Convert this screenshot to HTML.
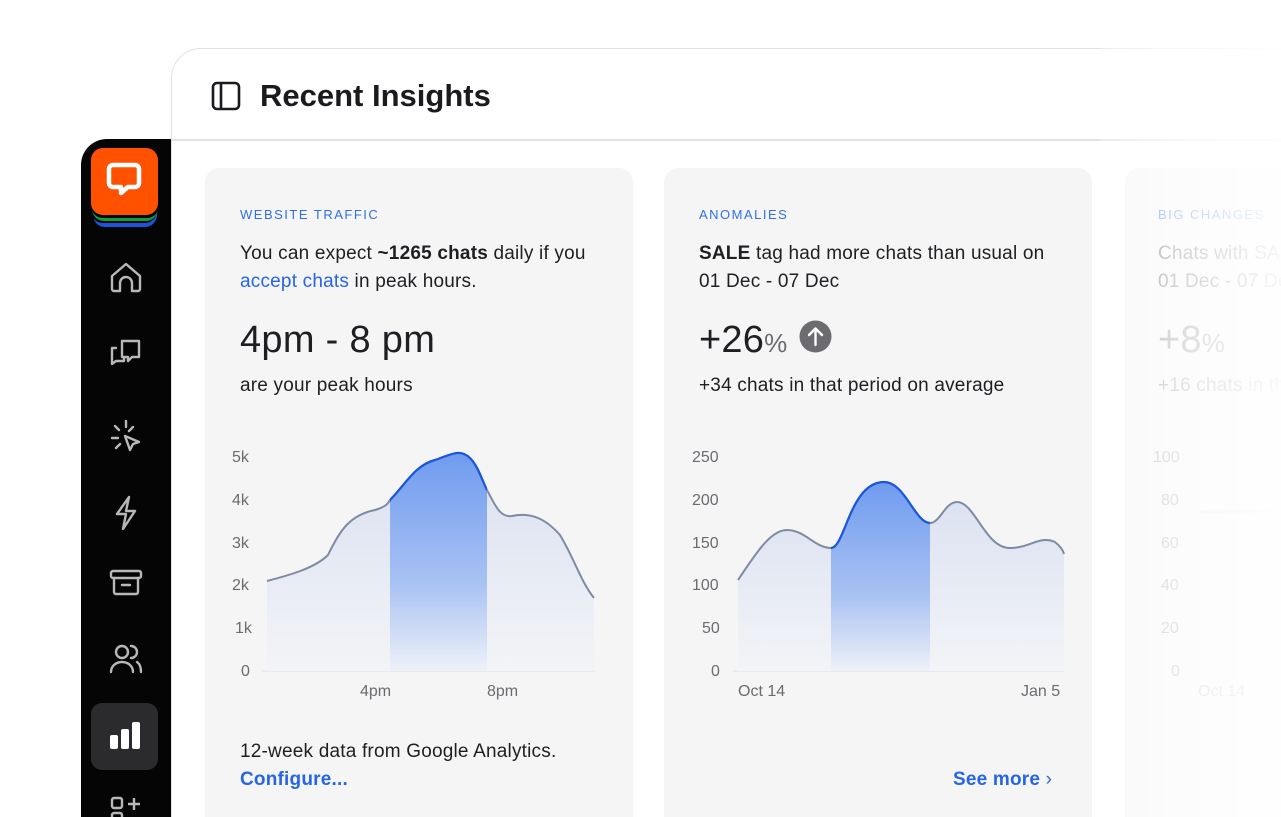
<!DOCTYPE html>
<html><head><meta charset="utf-8"><style>
*{margin:0;padding:0;box-sizing:border-box}
html,body{width:1281px;height:817px;overflow:hidden}
body{background:#fff;font-family:"Liberation Sans",sans-serif;position:relative;color:#1b1b1f}
.panel{position:absolute;left:171px;top:48px;width:1200px;height:800px;border:1.5px solid #e2e2e4;border-radius:30px 0 0 0;background:#fff}
.hdr{position:absolute;left:171px;top:139px;width:1110px;height:1.5px;background:#e2e2e4}
.title{position:absolute;left:260px;top:78px;font-size:31px;font-weight:600;letter-spacing:0}
.side{position:absolute;left:81px;top:139px;width:90px;height:678px;background:#050505;border-radius:26px 0 0 0}
.card{position:absolute;top:168px;width:428px;height:649px;background:#f5f5f6;border-radius:14px 14px 0 0}
.lab{position:absolute;font-size:13px;color:#2f6fe9;letter-spacing:1.5px}
.t{position:absolute;font-size:19px;line-height:28px;color:#1f1f23;white-space:nowrap;letter-spacing:0.2px}
.ax{position:absolute;font-size:16px;color:#6b6b70}
.blue{color:#2665e6}
</style></head><body>
<div class="panel"></div>
<div class="hdr"></div>
<svg style="position:absolute;left:211px;top:81px" width="30" height="30" viewBox="0 0 30 30" fill="none" stroke="#1b1b1f" stroke-width="2.6"><rect x="2" y="2" width="26" height="26" rx="4"/><line x1="10" y1="2" x2="10" y2="28"/></svg>
<div class="title">Recent Insights</div>

<div class="side"></div>
<svg style="position:absolute;left:89px;top:147px" width="72" height="84" viewBox="0 0 72 84">
<rect x="4" y="10" width="64" height="70" rx="12" fill="#1a56db"/>
<rect x="2" y="6" width="66" height="70" rx="12" fill="#050505"/>
<rect x="3" y="4" width="66" height="70" rx="12" fill="#0f9d42"/>
<rect x="2" y="1" width="68" height="70" rx="12" fill="#050505"/>
<rect x="2" y="1" width="67" height="67" rx="12" fill="#ff5100"/>
<path d="M24 18h22a4 4 0 0 1 4 4v14a4 4 0 0 1-4 4H39l-7 6v-6h-8a4 4 0 0 1-4-4V22a4 4 0 0 1 4-4z" fill="none" stroke="#fff" stroke-width="4.5" stroke-linejoin="round"/>
</svg>
<svg style="position:absolute;left:106px;top:258px" width="40" height="570" viewBox="0 0 40 570" fill="none" stroke="#b8b8bb" stroke-width="2.4" stroke-linecap="round" stroke-linejoin="round">
<path d="M6 31V18L20 6l14 12v13a2 2 0 0 1-2 2h-6v-8a6 6 0 0 0-12 0v8H8a2 2 0 0 1-2-2z"/>
<path d="M16 83h17V99h-7l-4 4v-4h-6z M10 90h-4v16l4-3h8v-4"/>
<path d="M20 163v6M9 168l4 4M6 180h6M10 190l4-4M27 169l-4 4M19 178l14 6-6 2-3 6z"/>
<path d="M23 239l-12 17h9l-3 15 12-18h-9z"/>
<rect x="5" y="313" width="30" height="7" rx="2"/><path d="M8 320v14a2 2 0 0 0 2 2h20a2 2 0 0 0 2-2v-14M16 327h8"/>
<circle cx="16" cy="394" r="6"/><path d="M5 414c0-6 5-10 11-10s11 4 11 10M25 388a6 6 0 0 1 0 12M31 404c3 2 4 6 4 10"/>
</svg>
<div style="position:absolute;left:91px;top:703px;width:67px;height:67px;background:#2b2b2d;border-radius:11px"></div>
<svg style="position:absolute;left:108px;top:720px" width="34" height="34" viewBox="0 0 34 34" fill="#fff"><rect x="2" y="15" width="8" height="14" rx="2"/><rect x="13" y="9" width="8" height="20" rx="2"/><rect x="24" y="2" width="8" height="27" rx="2"/></svg>
<svg style="position:absolute;left:110px;top:795px" width="34" height="22" viewBox="0 0 34 22" fill="none" stroke="#b8b8bb" stroke-width="2.4"><rect x="2" y="3" width="10" height="10" rx="2"/><path d="M24 3v12M18 9h12"/><rect x="2" y="18" width="10" height="10" rx="2"/></svg>

<div class="card" style="left:205px"></div>
<div class="card" style="left:664px"></div>
<div class="card" style="left:1125px"></div>

<div class="lab" style="left:240px;top:207px">WEBSITE TRAFFIC</div>
<div class="t" style="left:240px;top:240px">You can expect <b>~1265 chats</b> daily if you</div>
<div class="t" style="left:240px;top:268px"><span class="blue">accept chats</span> in peak hours.</div>
<div class="t" style="left:240px;top:318px;font-size:38px;line-height:44px;letter-spacing:0.3px">4pm - 8 pm</div>
<div class="t" style="left:240px;top:372px">are your peak hours</div>
<div class="ax" style="left:232px;top:449px">5k</div>
<div class="ax" style="left:232px;top:492px">4k</div>
<div class="ax" style="left:232px;top:535px">3k</div>
<div class="ax" style="left:232px;top:577px">2k</div>
<div class="ax" style="left:235px;top:620px">1k</div>
<div class="ax" style="left:241px;top:663px">0</div>
<div class="ax" style="left:360px;top:683px">4pm</div>
<div class="ax" style="left:487px;top:683px">8pm</div>
<div class="t" style="left:240px;top:738px">12-week data from Google Analytics.</div>
<div class="t blue" style="left:240px;top:766px;font-weight:700">Configure...</div>

<div class="lab" style="left:699px;top:207px">ANOMALIES</div>
<div class="t" style="left:699px;top:240px"><b>SALE</b> tag had more chats than usual on</div>
<div class="t" style="left:699px;top:268px">01 Dec - 07 Dec</div>
<div class="t" style="left:699px;top:318px;font-size:38px;line-height:44px">+26<span style="font-size:26px;color:#6b6b70">%</span></div>
<svg style="position:absolute;left:799px;top:320px" width="33" height="33" viewBox="0 0 33 33"><circle cx="16.5" cy="16.5" r="16" fill="#6b6b70"/><path d="M16.5 25V9M10 15l6.5-6.5L23 15" stroke="#fff" stroke-width="2.4" fill="none" stroke-linecap="round" stroke-linejoin="round"/></svg>
<div class="t" style="left:699px;top:372px">+34 chats in that period on average</div>
<div class="ax" style="left:692px;top:449px">250</div>
<div class="ax" style="left:692px;top:492px">200</div>
<div class="ax" style="left:692px;top:535px">150</div>
<div class="ax" style="left:692px;top:577px">100</div>
<div class="ax" style="left:702px;top:620px">50</div>
<div class="ax" style="left:711px;top:663px">0</div>
<div class="ax" style="left:738px;top:683px">Oct 14</div>
<div class="ax" style="left:1021px;top:683px">Jan 5</div>
<div class="t blue" style="left:953px;top:766px;font-weight:700">See more <span style="font-weight:400">›</span></div>

<svg style="position:absolute;left:0;top:0" width="1281" height="817">
<defs>
<linearGradient id="g1" x1="0" y1="0" x2="0" y2="1"><stop offset="0" stop-color="#d9e0f1"/><stop offset="1" stop-color="#f3f4f7"/></linearGradient>
<linearGradient id="g2" x1="0" y1="0" x2="0" y2="1"><stop offset="0" stop-color="#6f9bef"/><stop offset="0.6" stop-color="#a9c2f3"/><stop offset="1" stop-color="#eef1f8"/></linearGradient>
<clipPath id="c1"><rect x="390" y="400" width="97" height="272"/></clipPath>
<clipPath id="c2"><rect x="831" y="400" width="99" height="272"/></clipPath>
</defs>
<line x1="262" y1="671" x2="595" y2="671" stroke="#dfe0e4"/>
<line x1="733" y1="671" x2="1064" y2="671" stroke="#dfe0e4"/>
<path d="M267,581 C290,575 315,568 328,555 C340,530 350,515 375,510 C385,507 388,504 390,500 C405,485 415,465 435,460 C450,455 460,448 470,458 C478,466 482,480 487,490 C495,505 500,518 512,516 C530,512 545,518 560,535 C575,560 580,580 594,598 L594,671 L267,671Z" fill="url(#g1)"/>
<path d="M267,581 C290,575 315,568 328,555 C340,530 350,515 375,510 C385,507 388,504 390,500 C405,485 415,465 435,460 C450,455 460,448 470,458 C478,466 482,480 487,490 C495,505 500,518 512,516 C530,512 545,518 560,535 C575,560 580,580 594,598 L594,671 L267,671Z" fill="url(#g2)" clip-path="url(#c1)"/>
<path d="M267,581 C290,575 315,568 328,555 C340,530 350,515 375,510 C385,507 388,504 390,500 C405,485 415,465 435,460 C450,455 460,448 470,458 C478,466 482,480 487,490 C495,505 500,518 512,516 C530,512 545,518 560,535 C575,560 580,580 594,598" fill="none" stroke="#7f8aa3" stroke-width="2"/>
<path d="M267,581 C290,575 315,568 328,555 C340,530 350,515 375,510 C385,507 388,504 390,500 C405,485 415,465 435,460 C450,455 460,448 470,458 C478,466 482,480 487,490" fill="none" stroke="#1a56db" stroke-width="2.2" clip-path="url(#c1)"/>
<path d="M738,580 C755,555 770,530 787,530 C805,530 815,548 831,548 C845,548 850,482 884,482 C905,482 915,523 930,523 C940,523 945,502 957,502 C975,502 985,548 1010,548 C1030,548 1040,535 1055,542 C1060,546 1063,550 1064,554 L1064,671 L738,671Z" fill="url(#g1)"/>
<path d="M738,580 C755,555 770,530 787,530 C805,530 815,548 831,548 C845,548 850,482 884,482 C905,482 915,523 930,523 C940,523 945,502 957,502 L957,671 L738,671Z" fill="url(#g2)" clip-path="url(#c2)"/>
<path d="M738,580 C755,555 770,530 787,530 C805,530 815,548 831,548 C845,548 850,482 884,482 C905,482 915,523 930,523 C940,523 945,502 957,502 C975,502 985,548 1010,548 C1030,548 1040,535 1055,542 C1060,546 1063,550 1064,554" fill="none" stroke="#7f8aa3" stroke-width="2"/>
<path d="M831,548 C845,548 850,482 884,482 C905,482 915,523 930,523" fill="none" stroke="#1a56db" stroke-width="2.2" clip-path="url(#c2)"/>
</svg>

<div class="lab" style="left:1158px;top:207px">BIG CHANGES</div>
<div class="t" style="left:1158px;top:240px;color:#666">Chats with SALE</div>
<div class="t" style="left:1158px;top:268px;color:#666">01 Dec - 07 Dec</div>
<div class="t" style="left:1158px;top:318px;font-size:38px;line-height:44px;color:#888">+8<span style="font-size:26px">%</span></div>
<div class="t" style="left:1158px;top:372px;color:#999">+16 chats in that</div>
<div class="ax" style="left:1153px;top:449px;color:#aaa">100</div>
<div class="ax" style="left:1161px;top:492px;color:#aaa">80</div>
<div class="ax" style="left:1161px;top:535px;color:#aaa">60</div>
<div class="ax" style="left:1161px;top:577px;color:#aaa">40</div>
<div class="ax" style="left:1161px;top:620px;color:#aaa">20</div>
<div class="ax" style="left:1171px;top:663px;color:#aaa">0</div>
<div class="ax" style="left:1198px;top:683px;color:#bbb">Oct 14</div>
<div style="position:absolute;left:1200px;top:510px;width:81px;height:3px;background:#e4e6ec"></div>
<div style="position:absolute;left:1100px;top:0;width:181px;height:817px;background:linear-gradient(90deg,rgba(255,255,255,0.3),rgba(255,255,255,0.7) 40%,rgba(255,255,255,0.95))"></div>
</body></html>
